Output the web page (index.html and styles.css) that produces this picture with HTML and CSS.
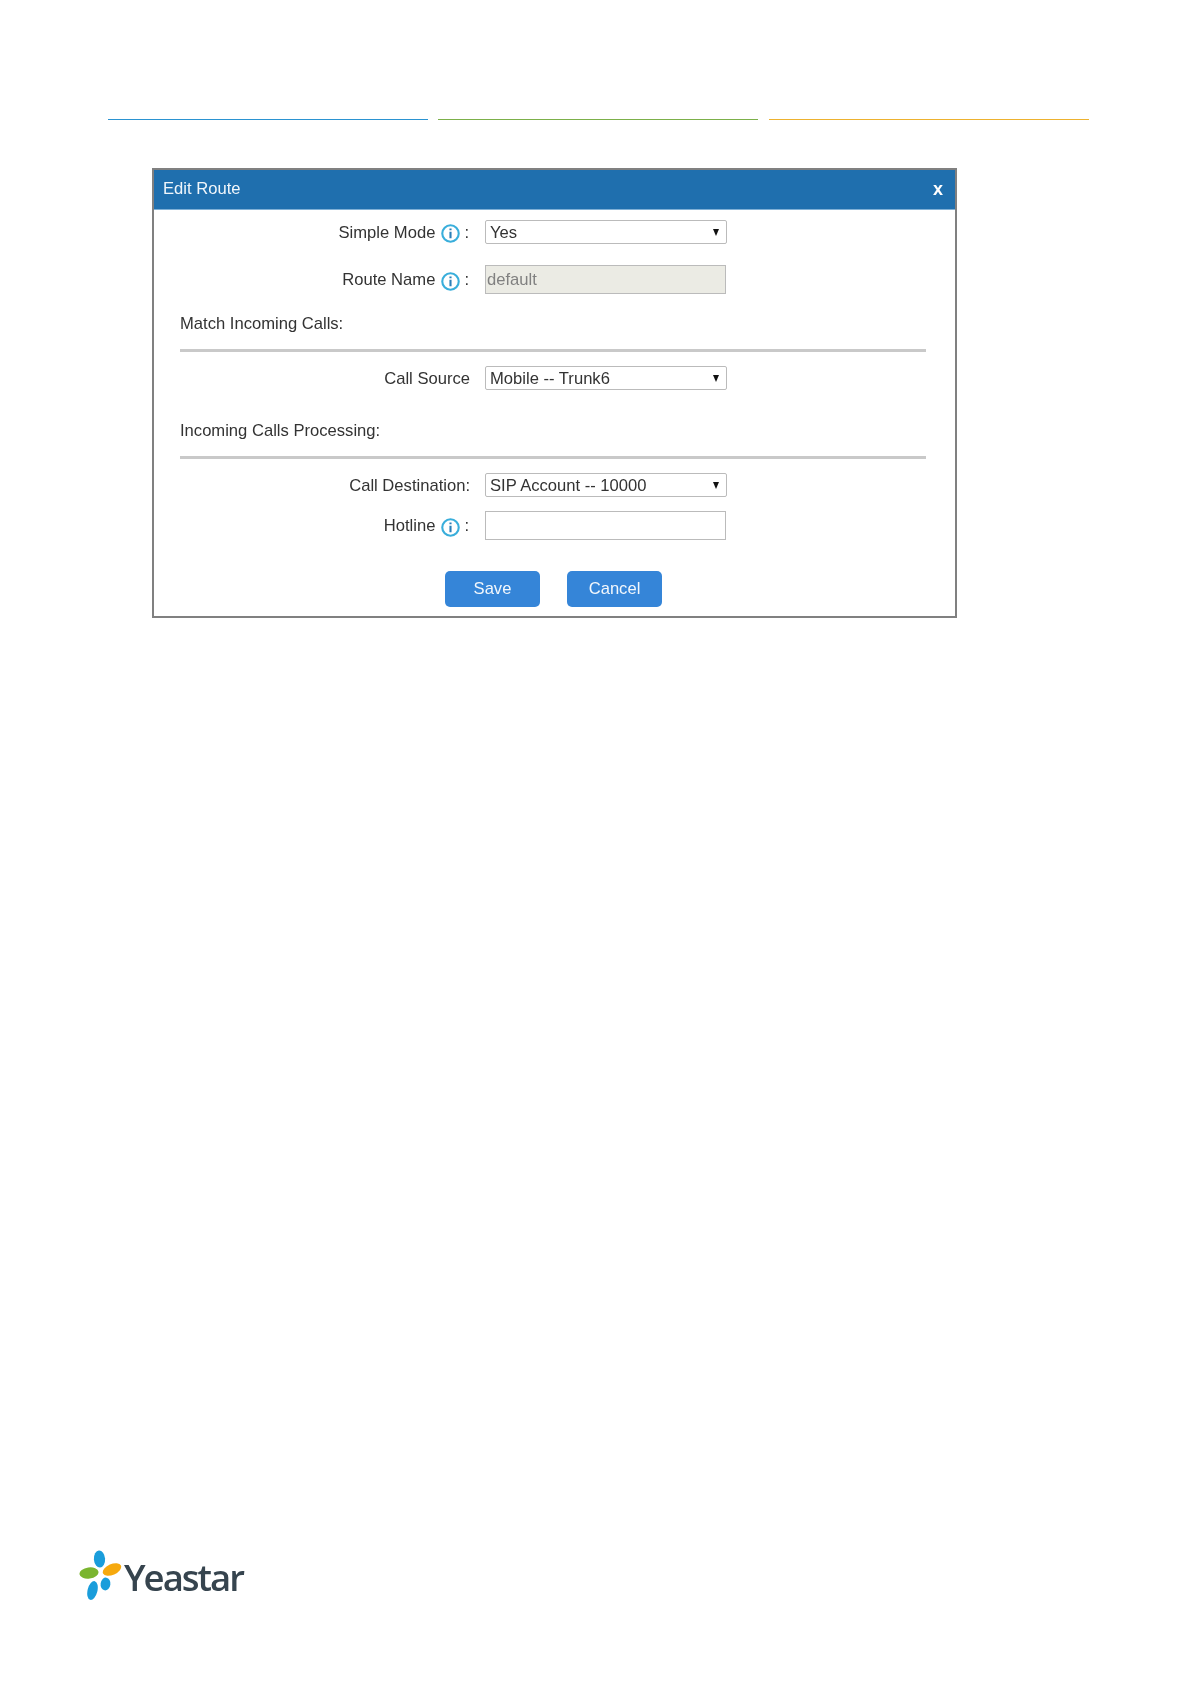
FILE: index.html
```html
<!DOCTYPE html>
<html lang="en">
<head>
<meta charset="utf-8">
<title>Edit Route</title>
<link rel="stylesheet" href="styles.css">
</head>
<body>
<main class="page">
  <div class="rules">
    <span class="rule rule-blue"></span>
    <span class="rule rule-green"></span>
    <span class="rule rule-orange"></span>
  </div>

  <form class="dialog">
    <header class="dialog-head">
      <span>Edit Route</span>
      <span class="close">x</span>
    </header>
    <div class="dialog-body">
      <div class="row row-first">
        <label class="label"><span>Simple Mode</span><svg class="info" viewBox="0 0 18 18"><circle cx="9" cy="9" r="7.8"/><path d="M9 4.2v1.8M9 7.4v6.2"/></svg><span class="colon">:</span></label>
        <div class="select-wrap"><select class="select"><option>Yes</option></select></div>
      </div>
      <div class="row row-name">
        <label class="label"><span>Route Name</span><svg class="info" viewBox="0 0 18 18"><circle cx="9" cy="9" r="7.8"/><path d="M9 4.2v1.8M9 7.4v6.2"/></svg><span class="colon">:</span></label>
        <input class="input input-off" value="default" disabled>
      </div>

      <h2 class="section section-match">Match Incoming Calls:</h2>
      <div class="row row-source">
        <label class="label">Call Source</label>
        <div class="select-wrap"><select class="select"><option>Mobile -- Trunk6</option></select></div>
      </div>

      <h2 class="section section-process">Incoming Calls Processing:</h2>
      <div class="row row-source">
        <label class="label">Call Destination:</label>
        <div class="select-wrap"><select class="select"><option>SIP Account -- 10000</option></select></div>
      </div>
      <div class="row row-hotline">
        <label class="label"><span>Hotline</span><svg class="info" viewBox="0 0 18 18"><circle cx="9" cy="9" r="7.8"/><path d="M9 4.2v1.8M9 7.4v6.2"/></svg><span class="colon">:</span></label>
        <input class="input">
      </div>

      <div class="actions">
        <button class="btn" type="button">Save</button>
        <button class="btn" type="button">Cancel</button>
      </div>
    </div>
  </form>

  <div class="logo">
    <svg class="logo-mark" viewBox="0 0 44 52">
      <ellipse class="petal-blue" cx="20.5" cy="10" rx="5.6" ry="8.6" transform="rotate(-4 20.5 10)"/>
      <ellipse class="petal-green" cx="10" cy="24" rx="9.6" ry="5.6" transform="rotate(-8 10 24)"/>
      <ellipse class="petal-orange" cx="33" cy="20.5" rx="9.8" ry="5.4" transform="rotate(-24 33 20.5)"/>
      <ellipse class="petal-blue" cx="13.5" cy="41.5" rx="4.9" ry="9.6" transform="rotate(14 13.5 41.5)"/>
      <ellipse class="petal-blue" cx="26.5" cy="35" rx="4.9" ry="6.4" transform="rotate(8 26.5 35)"/>
    </svg>
    <span class="logo-word">Yeastar</span>
  </div>
</main>
</body>
</html>
```
FILE: styles.css
```css
* { box-sizing: border-box; }
html, body { margin: 0; background: #fff; }
body { font-family: "Liberation Sans", Arial, sans-serif; font-size: 16.6px; color: #333; }

.page { height: 1684px; padding-top: 119px; display: flex; flex-direction: column; overflow: hidden; }

.rules { display: flex; gap: 10px; margin-left: 108px; }
.rule { width: 320px; height: 1px; }
.rule-blue { background: #2b93d1; }
.rule-green { background: #7cb04a; }
.rule-orange { background: #edb22f; margin-left: 1px; }

.dialog { margin: 48px 0 0 152px; width: 805px; height: 450px; border: 2px solid #808080; flex: none; filter: blur(0.3px); }
.dialog-head { height: 40px; background: #1f6fae; border-bottom: 1px solid #7fb0d6; color: #f0f6fb; display: flex; align-items: center; justify-content: space-between; padding: 0 12px 1px 9px; }
.close { font-weight: 700; font-size: 18px; color: #fff; }

.dialog-body { padding-top: 10px; }
.row { display: grid; grid-template-columns: 316px 242px; column-gap: 15px; align-items: center; }
.row-name { margin-top: 21px; }
.row-source { margin-top: 14px; }
.row-hotline { margin-top: 14px; }
.label { display: flex; justify-content: flex-end; align-items: center; white-space: nowrap; padding-top: 1px; }
.colon { margin-left: 4px; margin-right: 1px; }
.info { width: 19px; height: 19px; margin: 2px 0 0 6px; fill: none; stroke: #39aedb; stroke-width: 2; }
.info path { stroke: #2a7fb8; stroke-width: 2; }

.select-wrap { position: relative; height: 24px; }
.select-wrap::after { content: ""; position: absolute; right: 8px; top: 9px; border-style: solid; border-width: 7px 3.5px 0; border-color: #111 transparent transparent; pointer-events: none; }
.select { appearance: none; width: 100%; height: 100%; display: block; border: 1px solid #bbb; border-radius: 2px; background: #fff; padding: 0 0 0 4px; font: inherit; color: #333; }
.input { display: block; width: 241px; height: 29px; border: 1px solid #bbb; background: #fff; padding: 0 1px; font: inherit; color: #333; }
.input-off { background: #ebebe4; color: #808080; }

.section { margin: 0; padding: 0 0 16px; border-bottom: 3px solid #c9c9c9; margin-left: 26px; width: 746px; font: inherit; line-height: 18px; }
.section-match { margin-top: 21px; }
.section-process { margin-top: 32px; }

.actions { display: flex; justify-content: center; gap: 27px; margin-top: 31px; padding-right: 2px; }
.btn { width: 95px; height: 36px; border: 0; border-radius: 5px; background: #3585d8; color: #f2f7fc; font: inherit; padding: 0; }

.logo { display: flex; align-items: center; margin: 931px 0 0 79px; height: 52px; filter: blur(0.3px); }
.logo-mark { width: 44px; height: 52px; flex: none; }
.logo-word { font-family: "Open Sans", sans-serif; font-weight: 600; font-size: 36.5px; line-height: 52px; letter-spacing: -2px; color: #36444e; margin-left: 1px; padding-top: 3px; }
.petal-blue { fill: #1a9ddb; }
.petal-green { fill: #7ab52f; }
.petal-orange { fill: #f6a90e; }
```
